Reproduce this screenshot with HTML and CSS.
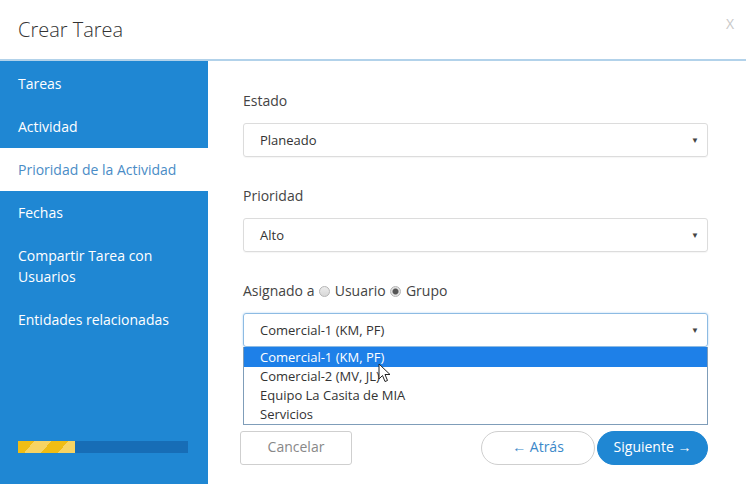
FILE: index.html
```html
<!DOCTYPE html>
<html lang="es">
<head>
    <meta charset="UTF-8">
    <meta name="viewport" content="width=device-width, initial-scale=1.0">
    <title>Crear Tarea</title>
    <link rel="stylesheet" href="styles.css">
</head>
<body>
    <div class="modal">
        <div class="header">
            <h1>Crear Tarea</h1>
            <span class="close">X</span>
        </div>

        <div class="body">
            <div class="sidebar">
                <ul class="steps">
                    <li>Tareas</li>
                    <li>Actividad</li>
                    <li class="active">Prioridad de la Actividad</li>
                    <li>Fechas</li>
                    <li>Compartir Tarea con Usuarios</li>
                    <li>Entidades relacionadas</li>
                </ul>
                <div class="progress">
                    <div class="progress-fill"></div>
                </div>
            </div>

            <div class="content">
                <div class="field">
                    <label>Estado</label>
                    <div class="select-box">Planeado<span class="arrow">&#9660;</span></div>
                </div>

                <div class="field">
                    <label>Prioridad</label>
                    <div class="select-box">Alto<span class="arrow">&#9660;</span></div>
                </div>

                <div class="field">
                    <label>Asignado a <input type="radio" name="asig" class="radio"> Usuario <input type="radio" name="asig" class="radio" checked> Grupo</label>
                    <div class="select-wrap">
                        <div class="select-box focus">Comercial-1 (KM, PF)<span class="arrow">&#9660;</span></div>
                        <ul class="options">
                            <li class="selected">Comercial-1 (KM, PF)</li>
                            <li>Comercial-2 (MV, JL)</li>
                            <li>Equipo La Casita de MIA</li>
                            <li>Servicios</li>
                        </ul>
                        <!-- puntero del raton -->
                        <svg class="cursor" width="13" height="20" viewBox="0 0 13 20">
                            <path d="M1 1 L1 16 L4.5 12.5 L7 18.5 L9.5 17.5 L7 11.5 L12 11.5 Z" fill="#fff" stroke="#222" stroke-width="1" stroke-linejoin="round"/>
                        </svg>
                    </div>
                </div>

                <div class="footer">
                    <button class="btn btn-cancel">Cancelar</button>
                    <div class="nav-buttons">
                        <button class="btn btn-back">&larr; Atrás</button>
                        <button class="btn btn-next">Siguiente &rarr;</button>
                    </div>
                </div>
            </div>
        </div>
    </div>
</body>
</html>
```

FILE: styles.css
```css
body {
    margin: 0;
    background-color: #ffffff;
    font-family: "Open Sans", Arial, sans-serif;
    color: #444;
}
.modal {
    width: 746px;
    height: 484px;
    overflow: hidden;
    display: flex;
    flex-direction: column;
}
.header {
    height: 59px;
    display: flex;
    align-items: center;
    justify-content: space-between;
    padding: 0 18px;
    border-bottom: 2px solid #b2d2ea;
    box-sizing: content-box;
}
.header h1 {
    margin: 0;
    font-size: 20px;
    font-weight: 300;
    color: #333;
    padding-bottom: 1px;
}
.close {
    font-size: 14px;
    color: #c8c8c8;
    margin-right: -6px;
    margin-top: -12px;
}
.body {
    flex: 1;
    display: flex;
}
.sidebar {
    width: 208px;
    background-color: #1f87d3;
    display: flex;
    flex-direction: column;
}
.steps {
    list-style: none;
    margin: 0;
    padding: 1px 0 0;
}
.steps li {
    padding: 11px 30px 11px 18px;
    font-size: 14px;
    line-height: 21px;
    color: #ffffff;
}
.steps li.active {
    background-color: #ffffff;
    color: #4a8cc6;
}
.progress {
    margin: 100px 20px 0 18px;
    height: 12px;
    background-color: #176db6;
}
.progress-fill {
    width: 57px;
    height: 12px;
    background: repeating-linear-gradient(-50deg, #f7d463 0, #f7d463 13px, #f0bd14 13px, #f0bd14 26px);
}
.content {
    flex: 1;
    padding: 30px 38px 0 35px;
}
.field {
    margin-bottom: 29px;
}
.field label {
    display: block;
    font-size: 14px;
    line-height: 20px;
    margin-bottom: 12px;
    color: #444;
}
.radio {
    appearance: none;
    -webkit-appearance: none;
    width: 11px;
    height: 11px;
    margin: 0 1px;
    border: 1px solid #b5b5b5;
    border-radius: 50%;
    background: linear-gradient(#ececec, #d8d8d8);
    vertical-align: -1px;
}
.radio:checked {
    background: radial-gradient(circle, #555 0, #555 2.5px, #e2e2e2 3.5px);
}
.select-box {
    height: 32px;
    border: 1px solid #dcdcdc;
    border-radius: 3px;
    box-shadow: 0 1px 1px rgba(0, 0, 0, 0.04);
    padding: 0 16px;
    font-size: 13px;
    line-height: 32px;
    color: #333;
    display: flex;
    justify-content: space-between;
}
.select-box .arrow {
    font-size: 8px;
    color: #444;
    margin-right: -8px;
}
.select-box.focus {
    border-color: #8dbbe3;
    box-shadow: 0 0 2px rgba(102, 175, 233, 0.6);
}
.select-wrap {
    position: relative;
}
.options {
    position: absolute;
    top: 34px;
    left: 0;
    right: 0;
    margin: 0;
    padding: 0;
    list-style: none;
    background-color: #ffffff;
    border: 1px solid #7f9db9;
    border-top: none;
    font-size: 13px;
    z-index: 2;
}
.options li {
    height: 19px;
    line-height: 19px;
    padding-left: 16px;
    color: #333;
}
.options li.selected {
    background-color: #1e80e8;
    color: #ffffff;
    height: 20px;
    line-height: 20px;
}
.cursor {
    position: absolute;
    left: 135px;
    top: 50px;
    z-index: 3;
}
.footer {
    margin-top: 84px;
    margin-left: -3px;
    display: flex;
    justify-content: space-between;
}
.btn {
    height: 34px;
    padding: 0 0 3px;
    font-family: "Open Sans", Arial, sans-serif;
    font-size: 14px;
    cursor: pointer;
    background-color: #ffffff;
}
.btn-cancel {
    width: 112px;
    border: 1px solid #cfcfcf;
    border-radius: 3px;
    color: #888;
}
.nav-buttons {
    display: flex;
    gap: 2px;
}
.btn-back {
    width: 114px;
    border: 1px solid #cfcfcf;
    border-radius: 17px;
    color: #3b88c9;
}
.btn-next {
    width: 111px;
    border: 1px solid #1f87d3;
    border-radius: 17px;
    background-color: #1f87d3;
    color: #ffffff;
}
```
